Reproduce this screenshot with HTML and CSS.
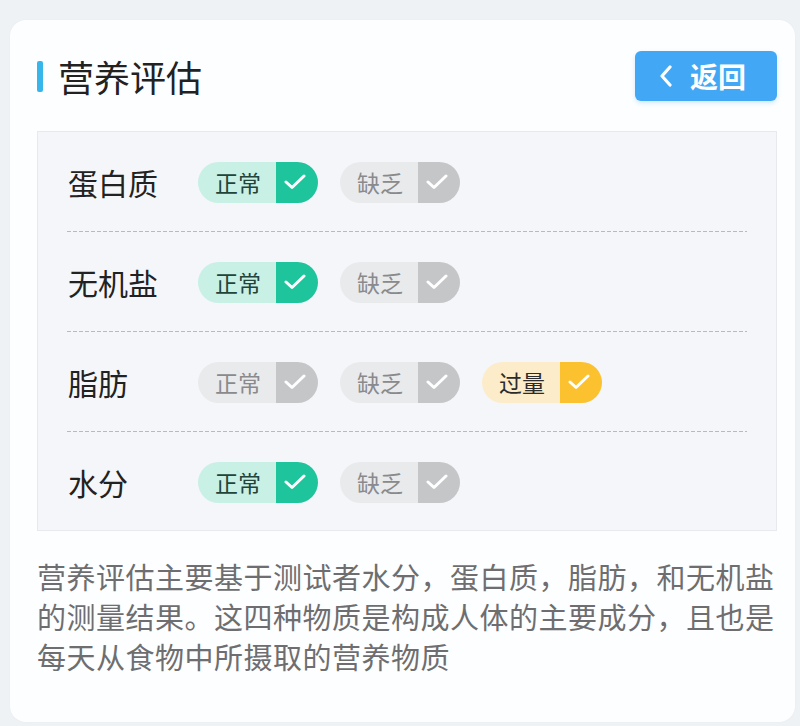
FILE: index.html
```html
<!DOCTYPE html>
<html lang="zh">
<head>
<meta charset="utf-8">
<link rel="stylesheet" href="styles.css">
</head>
<body>
<div class="page">
  <div class="card">
    <div class="header">
      <div class="title"><span class="bar"></span><span class="title-text">营养评估</span></div>
      <button class="back"><svg class="chev" width="16" height="22" viewBox="0 0 16 22"><path d="M12 2 L4 11 L12 20" fill="none" stroke="#fff" stroke-width="3.2" stroke-linecap="round" stroke-linejoin="round"/></svg><span>返回</span></button>
    </div>
    <div class="panel">
      <div class="row">
        <div class="label">蛋白质</div>
        <div class="pills">
          <div class="pill ok"><span class="ptext">正常</span><span class="pcheck"><svg width="22" height="16" viewBox="0 0 22 16"><path d="M2 8 L8 13.5 L20 2" fill="none" stroke="#fff" stroke-width="3" stroke-linecap="round" stroke-linejoin="round"/></svg></span></div>
          <div class="pill off"><span class="ptext">缺乏</span><span class="pcheck"><svg width="22" height="16" viewBox="0 0 22 16"><path d="M2 8 L8 13.5 L20 2" fill="none" stroke="#fff" stroke-width="3" stroke-linecap="round" stroke-linejoin="round"/></svg></span></div>
        </div>
      </div>
      <div class="row">
        <div class="label">无机盐</div>
        <div class="pills">
          <div class="pill ok"><span class="ptext">正常</span><span class="pcheck"><svg width="22" height="16" viewBox="0 0 22 16"><path d="M2 8 L8 13.5 L20 2" fill="none" stroke="#fff" stroke-width="3" stroke-linecap="round" stroke-linejoin="round"/></svg></span></div>
          <div class="pill off"><span class="ptext">缺乏</span><span class="pcheck"><svg width="22" height="16" viewBox="0 0 22 16"><path d="M2 8 L8 13.5 L20 2" fill="none" stroke="#fff" stroke-width="3" stroke-linecap="round" stroke-linejoin="round"/></svg></span></div>
        </div>
      </div>
      <div class="row">
        <div class="label">脂肪</div>
        <div class="pills">
          <div class="pill off"><span class="ptext">正常</span><span class="pcheck"><svg width="22" height="16" viewBox="0 0 22 16"><path d="M2 8 L8 13.5 L20 2" fill="none" stroke="#fff" stroke-width="3" stroke-linecap="round" stroke-linejoin="round"/></svg></span></div>
          <div class="pill off"><span class="ptext">缺乏</span><span class="pcheck"><svg width="22" height="16" viewBox="0 0 22 16"><path d="M2 8 L8 13.5 L20 2" fill="none" stroke="#fff" stroke-width="3" stroke-linecap="round" stroke-linejoin="round"/></svg></span></div>
          <div class="pill warn"><span class="ptext">过量</span><span class="pcheck"><svg width="22" height="16" viewBox="0 0 22 16"><path d="M2 8 L8 13.5 L20 2" fill="none" stroke="#fff" stroke-width="3" stroke-linecap="round" stroke-linejoin="round"/></svg></span></div>
        </div>
      </div>
      <div class="row">
        <div class="label">水分</div>
        <div class="pills">
          <div class="pill ok"><span class="ptext">正常</span><span class="pcheck"><svg width="22" height="16" viewBox="0 0 22 16"><path d="M2 8 L8 13.5 L20 2" fill="none" stroke="#fff" stroke-width="3" stroke-linecap="round" stroke-linejoin="round"/></svg></span></div>
          <div class="pill off"><span class="ptext">缺乏</span><span class="pcheck"><svg width="22" height="16" viewBox="0 0 22 16"><path d="M2 8 L8 13.5 L20 2" fill="none" stroke="#fff" stroke-width="3" stroke-linecap="round" stroke-linejoin="round"/></svg></span></div>
        </div>
      </div>
    </div>
    <p class="desc">营养评估主要基于测试者水分，蛋白质，脂肪，和无机盐<br>的测量结果。这四种物质是构成人体的主要成分，且也是<br>每天从食物中所摄取的营养物质</p>
  </div>
</div>
</body>
</html>
```

FILE: styles.css
```css
* { box-sizing: border-box; }
html, body { margin: 0; padding: 0; }
body {
  background: #eff2f5;
  font-family: "Noto Sans CJK SC", "Noto Sans", sans-serif;
  width: 800px;
  height: 726px;
  overflow: hidden;
}
.page {
  padding: 20px 5px 0 10px;
}
.card {
  background: #fdfeff;
  border-radius: 16px;
  height: 702px;
  padding: 31px 18px 0 27px;
  box-shadow: 0 0 2px rgba(0,0,0,0.04);
}
.header {
  display: flex;
  align-items: center;
  justify-content: space-between;
  height: 50px;
}
.title {
  display: flex;
  align-items: center;
}
.bar {
  display: block;
  width: 6px;
  height: 31px;
  background: #37b6ec;
  border-radius: 2px;
}
.title-text {
  margin-left: 15px;
  font-size: 36px;
  color: #222;
  line-height: 1;
}
.back {
  width: 142px;
  height: 50px;
  background: #42a7f5;
  border: none;
  border-radius: 6px;
  color: #fff;
  display: flex;
  align-items: center;
  justify-content: center;
  gap: 16px;
  padding: 0 8px 0 0;
  font-family: "Noto Sans CJK SC", sans-serif;
  font-size: 28px;
  font-weight: 700;
  box-shadow: 0 2px 4px rgba(66,167,245,0.25);
}
.panel {
  margin-top: 30px;
  width: 740px;
  height: 400px;
  background: #f4f6f9;
  border: 1px solid #e6e9ed;
  padding: 0 29px;
}
.row {
  height: 100px;
  display: flex;
  align-items: center;
  background-image: repeating-linear-gradient(to right, #b6bbc1 0 4px, transparent 4px 6px);
  background-size: 100% 1px;
  background-repeat: no-repeat;
  background-position: left bottom;
}
.row:last-child { background-image: none; }
.label {
  width: 131px;
  font-size: 30px;
  color: #222;
  padding-left: 1px;
}
.pills {
  display: flex;
  gap: 22px;
}
.pill {
  display: flex;
  height: 41px;
  width: 120px;
  border-radius: 21px;
  overflow: hidden;
}
.ptext {
  width: 78px;
  display: flex;
  align-items: center;
  justify-content: center;
  font-size: 23px;
  padding-left: 2px;
}
.pcheck {
  width: 42px;
  display: flex;
  align-items: center;
  justify-content: center;
  padding-right: 4px;
}
.ok .ptext { background: #c8f0e5; color: #22443b; }
.ok .pcheck { background: #1ec49b; }
.off .ptext { background: #e9eaec; color: #8a8a8c; }
.off .pcheck { background: #c5c6c8; }
.warn .ptext { background: #fcecca; color: #2c2c2c; }
.warn .pcheck { background: #fbc12e; }
.desc {
  margin: 25px 0 0 0;
  font-size: 29px;
  line-height: 40px;
  letter-spacing: 0.5px;
  color: #6e6e70;
  white-space: nowrap;
}
```
